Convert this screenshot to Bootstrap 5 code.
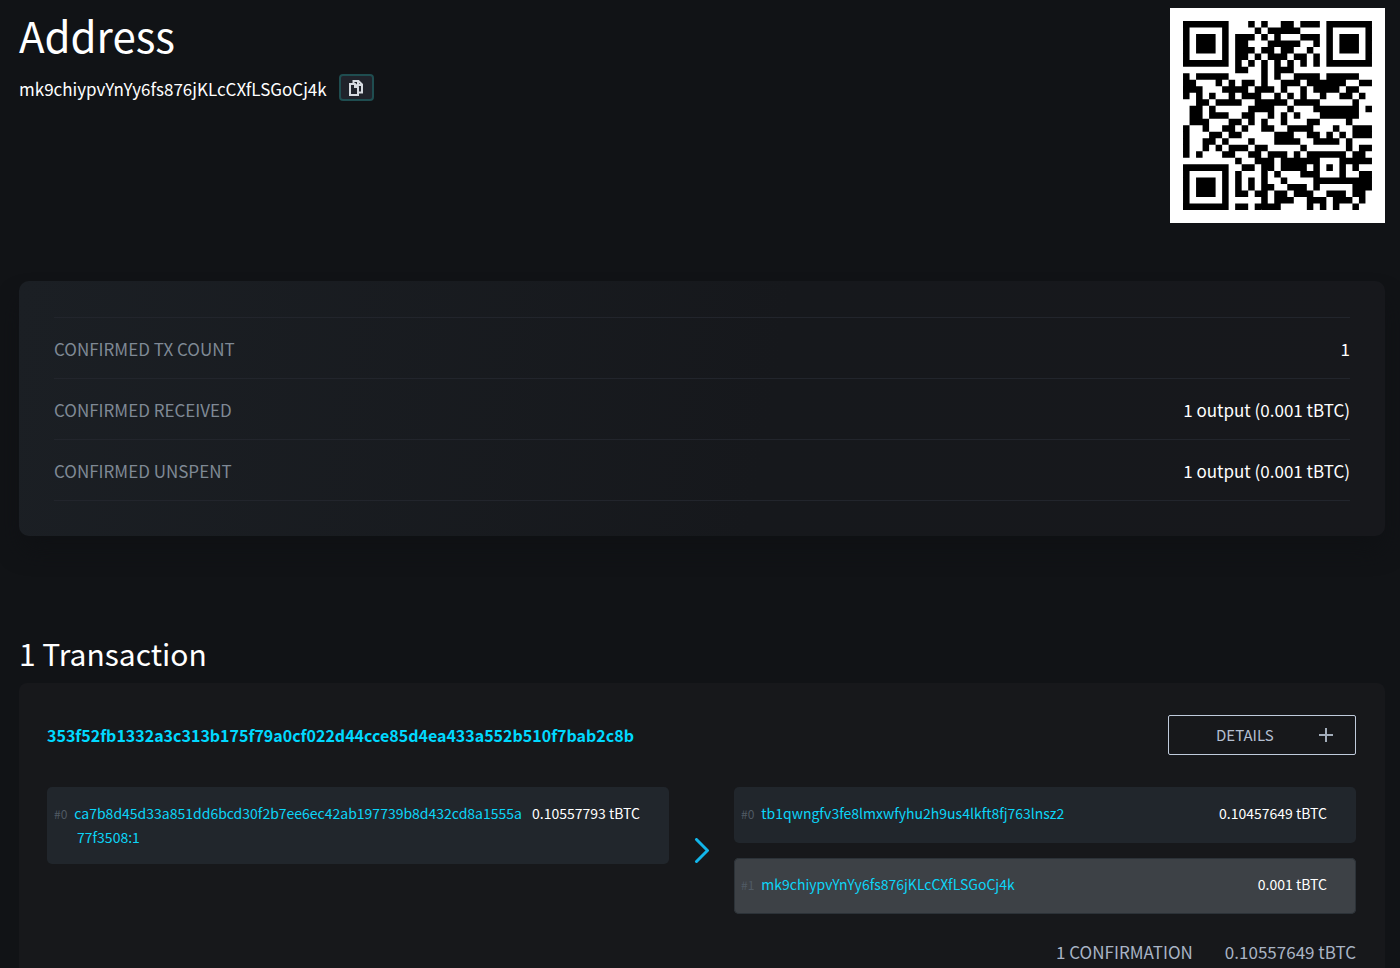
<!DOCTYPE html>
<html lang="en" data-bs-theme="dark">
<head>
<meta charset="utf-8">
<meta name="viewport" content="width=device-width, initial-scale=1">
<title>Address mk9chiypvYnYy6fs876jKLcCXfLSGoCj4k</title>
<link href="https://cdn.jsdelivr.net/npm/bootstrap@5.3.0/dist/css/bootstrap.min.css" rel="stylesheet">
<style>
body { background: #111316; color: #fff; font-family: "Noto Sans CJK SC", "Open Sans", sans-serif; font-size: 14px; line-height: 24px; }
a { color: #0cd5f8; text-decoration: none; }
a:hover { color: #7be9ff; }
.page { padding: 8px 15px 24px 19px; }
.page-title { font-size: 42px; line-height: 54px; }
.address-row { margin-top: 12px; gap: 12px; }
.address { font-size: 17px; line-height: 30px; }
.copy-btn { width: 35px; height: 27px; border: 2px solid #1f4d50; border-radius: 4px; background: #20232b; }
.qr { width: 215px; height: 215px; background: #fff; }
.summary { margin-top: 58px; padding: 36px 35px 35px; border-radius: 10px; background: linear-gradient(100deg, #1b1f24, #16181c 55%, #17181c); box-shadow: 0 16px 24px -4px #0f1114; }
.summary table { --bs-table-bg: transparent; font-size: 17px; }
.summary th, .summary td { padding: 19px 0 17px; }
.summary tr { border-top: 1px solid #22252c; }
.summary tr:last-child { border-bottom: 1px solid #22252c; }
.summary th { color: #7f8995; }
.summary td { color: #fff; }
.section-title { margin-top: 95px; font-size: 30px; line-height: 44px; }
.tx { margin-top: 8px; padding: 32px 29px 28px 28px; border-radius: 8px; background: #17181b; }
.tx-id { color: #00d9ff; font-size: 16px; }
.details-btn { width: 188px; height: 40px; padding: 0 22px 0 47px; border: 1px solid #c0cbdc; border-radius: 2px; color: #b4bfd0; background: transparent; font-size: 15px; }
.tx-body { margin-top: 32px; gap: 25px; }
.io-col { flex: 1 1 0; min-width: 0; }
.outputs { gap: 15px; }
.io { gap: 8px; padding: 14px 29px 15px 7px; border-radius: 5px; background: #21262c; }
.io.single { padding-bottom: 18px; }
.io.active { background: #3d4146; box-shadow: inset 0 0 0 1px #2c3238; }
.io-target { padding-left: 23px; text-indent: -23px; word-break: break-all; }
.io-index { margin-right: 7px; color: #505a64; font-size: 12px; line-height: 1; }
.tx-foot { margin-top: 26px; gap: 32px; color: #a9b4c5; font-size: 17px; }
</style>
</head>
<body>
<main class="page">
  <header class="d-flex justify-content-between align-items-start">
    <div>
      <h1 class="page-title fw-normal mb-0">Address</h1>
      <div class="address-row d-flex">
        <span class="address" id="address">mk9chiypvYnYy6fs876jKLcCXfLSGoCj4k</span>
        <button class="copy-btn d-flex align-items-center justify-content-center p-0" type="button" aria-label="Copy address">
          <svg width="16" height="18" viewBox="0 0 16 18" fill="none" stroke="#d6dae0" stroke-width="2" aria-hidden="true"><path d="M2 5h5l3 3v8H2zM7 5v3h3M5.500 4.500V2h5l3.500 3.500v8h-3M10 2v4h4"/></svg>
        </button>
      </div>
    </div>
    <svg class="qr flex-shrink-0" id="qr" viewBox="-2 -2 33 33" role="img" aria-label="QR code of the address"><path fill="#000"/></svg>
  </header>

  <section class="summary">
    <table class="table table-borderless mb-0">
      <tbody>
        <tr><th class="fw-normal" scope="row">CONFIRMED TX COUNT</th><td class="text-end">1</td></tr>
        <tr><th class="fw-normal" scope="row">CONFIRMED RECEIVED</th><td class="text-end">1 output (0.001 tBTC)</td></tr>
        <tr><th class="fw-normal" scope="row">CONFIRMED UNSPENT</th><td class="text-end">1 output (0.001 tBTC)</td></tr>
      </tbody>
    </table>
  </section>

  <h2 class="section-title fw-normal mb-0">1 Transaction</h2>
  <section class="tx">
    <div class="d-flex justify-content-between align-items-center">
      <a class="tx-id fw-bold" href="#tx">353f52fb1332a3c313b175f79a0cf022d44cce85d4ea433a552b510f7bab2c8b</a>
      <button class="details-btn d-flex justify-content-between align-items-center" type="button">DETAILS
        <svg width="14" height="14" viewBox="0 0 14 14" stroke="#a3adbb" stroke-width="2" aria-hidden="true"><path d="M7 0v14M0 7h14"/></svg>
      </button>
    </div>
    <div class="tx-body d-flex">
      <div class="io-col">
        <div class="io d-flex justify-content-between">
          <div class="io-target"><span class="io-index">#0</span><a href="#in0">ca7b8d45d33a851dd6bcd30f2b7ee6ec42ab197739b8d432cd8a1555a77f3508:1</a></div>
          <span class="text-nowrap">0.10557793 tBTC</span>
        </div>
      </div>
      <svg class="align-self-center flex-shrink-0" width="15" height="26" viewBox="0 0 15 26" fill="none" stroke="#12b5ea" stroke-width="3" stroke-linecap="round" aria-hidden="true"><path d="M2.500 1.500L13.500 12.500L2.500 23.500"/></svg>
      <div class="io-col outputs d-flex flex-column">
        <div class="io single d-flex justify-content-between">
          <div class="io-target"><span class="io-index">#0</span><a href="#out0">tb1qwngfv3fe8lmxwfyhu2h9us4lkft8fj763lnsz2</a></div>
          <span class="text-nowrap">0.10457649 tBTC</span>
        </div>
        <div class="io single active d-flex justify-content-between">
          <div class="io-target"><span class="io-index">#1</span><a href="#out1">mk9chiypvYnYy6fs876jKLcCXfLSGoCj4k</a></div>
          <span class="text-nowrap">0.001 tBTC</span>
        </div>
      </div>
    </div>
    <div class="tx-foot d-flex justify-content-end"><span>1 CONFIRMATION</span><span>0.10557649 tBTC</span></div>
  </section>
</main>
<script src="https://cdn.jsdelivr.net/npm/bootstrap@5.3.0/dist/js/bootstrap.bundle.min.js"></script>
<script>
// QR code, version 3, level M, mask 2: holds exactly 42 bytes of text.
(function () {
  const N = 29, ECC = 26, FORMAT = 0b101111001111100;
  const text = 'bitcoin:' + document.getElementById('address').textContent;

  let bits = '0100' + text.length.toString(2).padStart(8, '0');
  for (const ch of text) bits += ch.charCodeAt(0).toString(2).padStart(8, '0');
  bits += '0000';
  const data = bits.match(/.{8}/g).map(b => parseInt(b, 2));

  // Reed-Solomon remainder over GF(256).
  const mul = (a, b) => {
    let r = 0;
    for (; b; b >>= 1) { if (b & 1) r ^= a; a <<= 1; if (a & 256) a ^= 0x11d; }
    return r;
  };
  const gen = Array(ECC).fill(0);
  gen[ECC - 1] = 1;
  for (let i = 0, root = 1; i < ECC; i++, root = mul(root, 2))
    for (let j = 0; j < ECC; j++) gen[j] = mul(gen[j], root) ^ (j + 1 < ECC ? gen[j + 1] : 0);
  const rem = Array(ECC).fill(0);
  for (const d of data) {
    const f = d ^ rem.shift();
    rem.push(0);
    gen.forEach((g, i) => { rem[i] ^= mul(g, f); });
  }
  const stream = data.concat(rem).map(b => b.toString(2).padStart(8, '0')).join('');

  // Fixed patterns.
  const m = Array.from({ length: N }, () => Array(N).fill(null));
  const set = (x, y, v) => { if (x >= 0 && y >= 0 && x < N && y < N) m[y][x] = v ? 1 : 0; };
  for (let i = 0; i < N; i++) { set(6, i, i % 2 === 0); set(i, 6, i % 2 === 0); }
  const rings = (cx, cy, r, light) => {
    for (let dy = -r; dy <= r; dy++) for (let dx = -r; dx <= r; dx++)
      set(cx + dx, cy + dy, !light.includes(Math.max(Math.abs(dx), Math.abs(dy))));
  };
  rings(3, 3, 4, [2, 4]); rings(N - 4, 3, 4, [2, 4]); rings(3, N - 4, 4, [2, 4]);
  rings(22, 22, 2, [1]);
  for (let i = 0; i < 15; i++) {
    const b = FORMAT >> i & 1;
    if (i < 6) set(8, i, b); else if (i < 8) set(8, i + 1, b); else if (i === 8) set(7, 8, b); else set(14 - i, 8, b);
    if (i < 8) set(N - 1 - i, 8, b); else set(8, N - 15 + i, b);
  }
  set(8, N - 8, 1);

  // Zigzag placement of the data.
  let k = 0;
  for (let right = N - 1; right >= 1; right -= 2) {
    if (right === 6) right = 5;
    const up = ((right + 1) & 2) === 0;
    for (let v = 0; v < N; v++) for (let j = 0; j < 2; j++) {
      const x = right - j, y = up ? N - 1 - v : v;
      if (m[y][x] === null) m[y][x] = (+(stream[k++] || 0)) ^ (x % 3 === 0 ? 1 : 0);
    }
  }

  let d = '';
  m.forEach((row, y) => row.forEach((v, x) => { if (v) d += `M${x} ${y}h1v1h-1z`; }));
  document.querySelector('#qr path').setAttribute('d', d);
})();
</script>
</body>
</html>
